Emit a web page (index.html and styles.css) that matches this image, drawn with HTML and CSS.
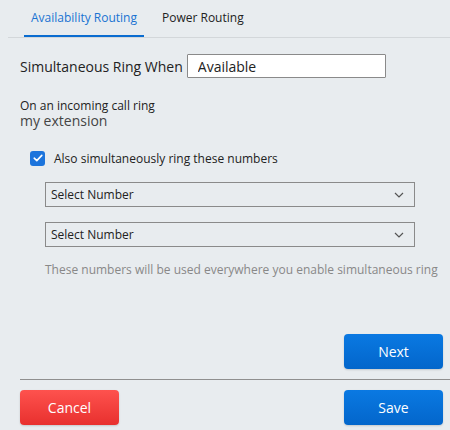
FILE: index.html
```html
<!DOCTYPE html>
<html>

<head>
    <link rel="stylesheet" href="styles.css">
</head>

<body>

    <div class="tabs">
        <div class="tab active">Availability Routing</div>
        <div class="tab">Power Routing</div>
    </div>

    <div class="content">

        <div class="ringRow">
            <label for="ringWhen">Simultaneous Ring When</label>
            <input type="text" id="ringWhen" class="ringInput" value="Available">
        </div>

        <div class="incoming">
            <div class="incomingTitle">On an incoming call ring</div>
            <div class="incomingValue">my extension</div>
        </div>

        <div class="checkRow">
            <span class="checkBox">
                <svg width="10" height="8" viewBox="0 0 10 8">
                    <path d="M1.2 4.2 L3.8 6.6 L8.8 1.4" fill="none" stroke="white" stroke-width="1.6" stroke-linecap="round" stroke-linejoin="round" />
                </svg>
            </span>
            <span class="checkLabel">Also simultaneously ring these numbers</span>
        </div>

        <div class="numbers">
            <div class="selectBox">
                <span>Select Number</span>
                <svg width="10" height="6" viewBox="0 0 10 6">
                    <path d="M1 1 L5 5 L9 1" fill="none" stroke="#555" stroke-width="1.2" />
                </svg>
            </div>
            <div class="selectBox">
                <span>Select Number</span>
                <svg width="10" height="6" viewBox="0 0 10 6">
                    <path d="M1 1 L5 5 L9 1" fill="none" stroke="#555" stroke-width="1.2" />
                </svg>
            </div>
            <div class="hint">These numbers will be used everywhere you enable simultaneous ring</div>
        </div>

        <div class="nextRow">
            <button class="btn blue">Next</button>
        </div>

        <hr class="divider">

        <div class="footer">
            <button class="btn red">Cancel</button>
            <button class="btn blue">Save</button>
        </div>

    </div>

</body>

</html>
```

FILE: styles.css
```css
body {
    margin: 0;
    background-color: #e8ecef;
    font-family: "Open Sans", "DejaVu Sans", sans-serif;
    color: #222;
    width: 450px;
    height: 430px;
    overflow: hidden;
}

.tabs {
    display: flex;
    margin-left: 8px;
    height: 37px;
    border-bottom: 1px solid #d3d7da;
}

.tab {
    height: 35px;
    line-height: 35px;
    padding: 0 7px;
    margin-left: 16px;
    font-size: 12px;
    color: #222;
    border-bottom: 2px solid transparent;
}

.tab + .tab {
    margin-left: 11px;
}

.tab.active {
    color: #1a73d2;
    border-bottom-color: #0a6cd0;
}

.content {
    padding: 0 7px 0 20px;
}

.ringRow {
    display: flex;
    align-items: center;
    margin-top: 16px;
    height: 24px;
}

.ringRow label {
    font-size: 14px;
    margin-right: 4px;
}

.ringInput {
    box-sizing: border-box;
    width: 199px;
    height: 24px;
    border: 1px solid #8a8a8a;
    border-radius: 1px;
    background: white;
    font-family: inherit;
    font-size: 14px;
    padding: 0 10px;
    color: #222;
}

.incoming {
    margin-top: 21px;
}

.incomingTitle {
    font-size: 12px;
    line-height: 14px;
}

.incomingValue {
    font-size: 14px;
    line-height: 16px;
    color: #444;
}

.checkRow {
    display: flex;
    align-items: center;
    margin-top: 21px;
    margin-left: 10px;
    height: 16px;
}

.checkBox {
    width: 15px;
    height: 15px;
    border-radius: 3px;
    background-color: #1c74dc;
    display: flex;
    align-items: center;
    justify-content: center;
    margin-right: 9px;
}

.checkLabel {
    font-size: 12px;
}

.numbers {
    margin-left: 25px;
    margin-top: 16px;
    width: 370px;
}

.selectBox {
    box-sizing: border-box;
    height: 25px;
    border: 1px solid #8a8a8a;
    display: flex;
    align-items: center;
    justify-content: space-between;
    padding: 0 10px 0 5px;
    font-size: 12px;
    margin-bottom: 15px;
}

.hint {
    font-size: 12px;
    line-height: 16px;
    color: #888;
    margin-top: 3px;
    white-space: nowrap;
}

.nextRow {
    display: flex;
    justify-content: flex-end;
    margin-top: 56px;
}

.btn {
    width: 99px;
    height: 35px;
    border: none;
    border-radius: 4px;
    color: white;
    font-family: inherit;
    font-size: 14px;
    box-shadow: 0 1px 2px rgba(0, 0, 0, 0.15);
}

.btn.blue {
    background: linear-gradient(#0a79e2, #0366cb);
}

.btn.red {
    background: linear-gradient(#fe524e, #e8302e);
}

.divider {
    border: none;
    border-top: 1px solid #8f8f8f;
    margin: 10px -7px 10px 0;
}

.footer {
    display: flex;
    justify-content: space-between;
}
```
